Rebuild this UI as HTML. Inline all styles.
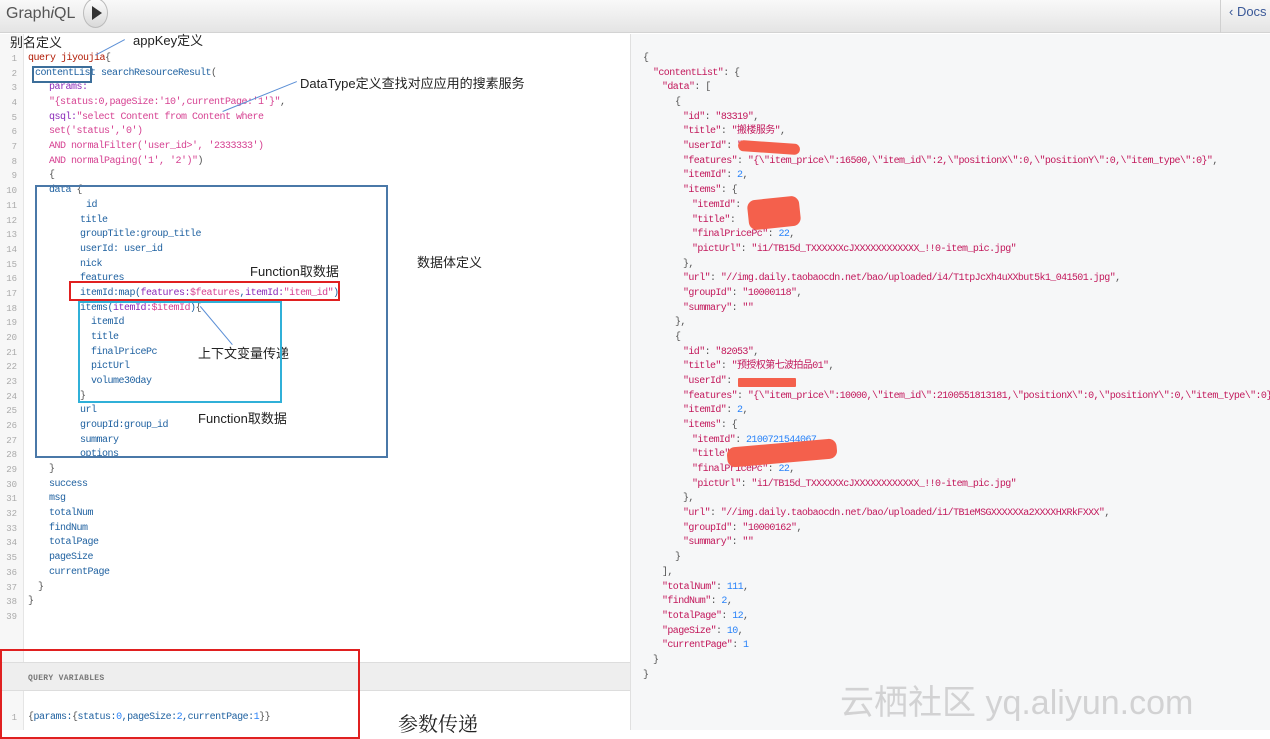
<!DOCTYPE html>
<html><head><meta charset="utf-8"><style>
*{margin:0;padding:0;box-sizing:border-box}
body{width:1270px;height:730px;overflow:hidden;background:#fff;position:relative;font-family:"Liberation Sans","Noto Sans CJK SC",sans-serif}
.top{position:absolute;left:0;top:0;width:1270px;height:33px;background:linear-gradient(#f9f9f9,#e4e4e4);border-bottom:1px solid #d3d3d3}
.logo{position:absolute;left:6px;top:5px;font-size:16px;color:#555}
.run{position:absolute;left:83px;top:-2px;width:25px;height:30px;border-radius:50%;background:linear-gradient(#fdfdfd,#d9d9d9);border:1px solid #bbb}
.run:after{content:"";position:absolute;left:8px;top:7px;border-left:10px solid #333;border-top:7px solid transparent;border-bottom:7px solid transparent}
.docs{position:absolute;left:1220px;top:0;height:33px;border-left:1px solid #d0d0d0;padding:4px 0 0 8px;font-size:13px;color:#3b5998}
.res{position:absolute;left:630px;top:34px;width:640px;height:696px;background:#f6f7f8;border-left:1px solid #e0e0e0}
.gut{position:absolute;left:0;top:34px;width:24px;height:628px;background:#f7f7f7;border-right:1px solid #e5e5e5}
.qv{position:absolute;left:0;top:662px;width:630px;height:29px;background:#eeeeee;border-top:1px solid #ddd;border-bottom:1px solid #ddd;font:bold 8px "Liberation Mono",monospace;color:#777;padding:11px 0 0 28px;letter-spacing:.3px}
.gut2{position:absolute;left:0;top:691px;width:24px;height:39px;background:#f7f7f7;border-right:1px solid #e5e5e5}
.l{position:absolute;font:10px/14.68px "Liberation Mono","Noto Sans CJK SC",monospace;letter-spacing:-0.5px;white-space:pre;color:#1f61a0}
.r{letter-spacing:-0.6px}
.n{position:absolute;left:0;width:17px;text-align:right;font:9px/14.68px "Liberation Mono",monospace;color:#aaa}
.k{color:#b11a04}.s{color:#d64292}.a{color:#8b2bb9}.p{color:#555}.f{color:#1f61a0}.num{color:#2882f9}
.j{color:#c2185b}
.ann{position:absolute;font-size:13px;color:#222;white-space:nowrap}
.box{position:absolute;border:2px solid}
.red{position:absolute;background:#f4604c;border-radius:8px}
.ar{position:absolute;height:1px;background:#5b8fd6;transform-origin:0 0}
</style></head><body>
<div class="top"><div class="logo">Graph<i>i</i>QL</div><div class="run"></div><div class="docs">&#x2039; Docs</div></div>
<div class="gut"></div>
<div class="res"></div>

<div class="n" style="top:52px">1</div><div class="n" style="top:66.7px">2</div><div class="n" style="top:81.4px">3</div><div class="n" style="top:96px">4</div><div class="n" style="top:110.7px">5</div><div class="n" style="top:125.4px">6</div><div class="n" style="top:140.1px">7</div><div class="n" style="top:154.8px">8</div><div class="n" style="top:169.4px">9</div><div class="n" style="top:184.1px">10</div><div class="n" style="top:198.8px">11</div><div class="n" style="top:213.5px">12</div><div class="n" style="top:228.2px">13</div><div class="n" style="top:242.8px">14</div><div class="n" style="top:257.5px">15</div><div class="n" style="top:272.2px">16</div><div class="n" style="top:286.9px">17</div><div class="n" style="top:301.6px">18</div><div class="n" style="top:316.2px">19</div><div class="n" style="top:330.9px">20</div><div class="n" style="top:345.6px">21</div><div class="n" style="top:360.3px">22</div><div class="n" style="top:375px">23</div><div class="n" style="top:389.6px">24</div><div class="n" style="top:404.3px">25</div><div class="n" style="top:419px">26</div><div class="n" style="top:433.7px">27</div><div class="n" style="top:448.4px">28</div><div class="n" style="top:463px">29</div><div class="n" style="top:477.7px">30</div><div class="n" style="top:492.4px">31</div><div class="n" style="top:507.1px">32</div><div class="n" style="top:521.8px">33</div><div class="n" style="top:536.4px">34</div><div class="n" style="top:551.1px">35</div><div class="n" style="top:565.8px">36</div><div class="n" style="top:580.5px">37</div><div class="n" style="top:595.2px">38</div><div class="n" style="top:609.8px">39</div>

<div class="l" style="left:28px;top:52px"><span class="k">query jiyoujia</span><span class="p">{</span></div>
<div class="l" style="left:35px;top:66.7px">contentList searchResourceResult<span class="p">(</span></div>
<div class="l a" style="left:49px;top:81.4px">params:</div>
<div class="l s" style="left:49px;top:96px">"{status:0,pageSize:'10',currentPage:'1'}"<span class="p">,</span></div>
<div class="l" style="left:49px;top:110.7px"><span class="a">qsql:</span><span class="s">"select Content from Content where</span></div>
<div class="l s" style="left:49px;top:125.4px">set('status','0')</div>
<div class="l s" style="left:49px;top:140.1px">AND normalFilter('user_id&gt;', '2333333')</div>
<div class="l s" style="left:49px;top:154.8px">AND normalPaging('1', '2')"<span class="p">)</span></div>
<div class="l p" style="left:49px;top:169.4px">{</div>
<div class="l" style="left:49px;top:184.1px">data <span class="p">{</span></div>
<div class="l" style="left:86px;top:198.8px">id</div>
<div class="l" style="left:80px;top:213.5px">title</div>
<div class="l" style="left:80px;top:228.2px">groupTitle:group_title</div>
<div class="l" style="left:80px;top:242.8px">userId: user_id</div>
<div class="l" style="left:80px;top:257.5px">nick</div>
<div class="l" style="left:80px;top:272.2px">features</div>
<div class="l" style="left:80px;top:286.9px">itemId:map(<span class="a">features:</span><span class="s">$features</span>,<span class="a">itemId:</span><span class="s">"item_id"</span>)</div>
<div class="l" style="left:80px;top:301.6px">items(<span class="a">itemId:</span><span class="s">$itemId</span>)<span class="p">{</span></div>
<div class="l" style="left:91px;top:316.2px">itemId</div>
<div class="l" style="left:91px;top:330.9px">title</div>
<div class="l" style="left:91px;top:345.6px">finalPricePc</div>
<div class="l" style="left:91px;top:360.3px">pictUrl</div>
<div class="l" style="left:91px;top:375px">volume30day</div>
<div class="l p" style="left:80px;top:389.6px">}</div>
<div class="l" style="left:80px;top:404.3px">url</div>
<div class="l" style="left:80px;top:419px">groupId:group_id</div>
<div class="l" style="left:80px;top:433.7px">summary</div>
<div class="l" style="left:80px;top:448.4px">options</div>
<div class="l p" style="left:49px;top:463px">}</div>
<div class="l" style="left:49px;top:477.7px">success</div>
<div class="l" style="left:49px;top:492.4px">msg</div>
<div class="l" style="left:49px;top:507.1px">totalNum</div>
<div class="l" style="left:49px;top:521.8px">findNum</div>
<div class="l" style="left:49px;top:536.4px">totalPage</div>
<div class="l" style="left:49px;top:551.1px">pageSize</div>
<div class="l" style="left:49px;top:565.8px">currentPage</div>
<div class="l p" style="left:38px;top:580.5px">}</div>
<div class="l p" style="left:28px;top:595.2px">}</div>

<div class="qv">QUERY VARIABLES</div>
<div class="gut2"></div>
<div class="n" style="top:711px">1</div>
<div class="l" style="left:28px;top:711px"><span class="p">{</span>params:<span class="p">{</span>status:<span class="num">0</span>,pageSize:<span class="num">2</span>,currentPage:<span class="num">1</span><span class="p">}}</span></div>

<div class="l r p" style="left:643px;top:52px">{</div>
<div class="l r" style="left:653px;top:66.7px"><span class="j">"contentList"</span><span class="p">: {</span></div>
<div class="l r" style="left:662px;top:81.4px"><span class="j">"data"</span><span class="p">: [</span></div>
<div class="l r p" style="left:675px;top:96px">{</div>
<div class="l r j" style="left:683px;top:110.7px">"id"<span class="p">: </span>"83319"<span class="p">,</span></div>
<div class="l r j" style="left:683px;top:125.4px">"title"<span class="p">: </span>"搬楼服务"<span class="p">,</span></div>
<div class="l r j" style="left:683px;top:140.1px">"userId"<span class="p">: </span>"</div>
<div class="l r j" style="left:683px;top:154.8px">"features"<span class="p">: </span>"{\"item_price\":16500,\"item_id\":2,\"positionX\":0,\"positionY\":0,\"item_type\":0}"<span class="p">,</span></div>
<div class="l r j" style="left:683px;top:169.4px">"itemId"<span class="p">: </span><span class="num">2</span><span class="p">,</span></div>
<div class="l r j" style="left:683px;top:184.1px">"items"<span class="p">: {</span></div>
<div class="l r j" style="left:692px;top:198.8px">"itemId"<span class="p">: </span></div>
<div class="l r j" style="left:692px;top:213.5px">"title"<span class="p">: </span></div>
<div class="l r j" style="left:692px;top:228.2px">"finalPricePc"<span class="p">: </span><span class="num">22</span><span class="p">,</span></div>
<div class="l r j" style="left:692px;top:242.8px">"pictUrl"<span class="p">: </span>"i1/TB15d_TXXXXXXcJXXXXXXXXXXXX_!!0-item_pic.jpg"</div>
<div class="l r p" style="left:683px;top:257.5px">},</div>
<div class="l r j" style="left:683px;top:272.2px">"url"<span class="p">: </span>"//img.daily.taobaocdn.net/bao/uploaded/i4/T1tpJcXh4uXXbut5k1_041501.jpg"<span class="p">,</span></div>
<div class="l r j" style="left:683px;top:286.9px">"groupId"<span class="p">: </span>"10000118"<span class="p">,</span></div>
<div class="l r j" style="left:683px;top:301.6px">"summary"<span class="p">: </span>""</div>
<div class="l r p" style="left:675px;top:316.2px">},</div>
<div class="l r p" style="left:675px;top:330.9px">{</div>
<div class="l r j" style="left:683px;top:345.6px">"id"<span class="p">: </span>"82053"<span class="p">,</span></div>
<div class="l r j" style="left:683px;top:360.3px">"title"<span class="p">: </span>"预授权第七波拍品01"<span class="p">,</span></div>
<div class="l r j" style="left:683px;top:375px">"userId"<span class="p">: </span></div>
<div class="l r j" style="left:683px;top:389.6px">"features"<span class="p">: </span>"{\"item_price\":10000,\"item_id\":2100551813181,\"positionX\":0,\"positionY\":0,\"item_type\":0}"<span class="p">,</span></div>
<div class="l r j" style="left:683px;top:404.3px">"itemId"<span class="p">: </span><span class="num">2</span><span class="p">,</span></div>
<div class="l r j" style="left:683px;top:419px">"items"<span class="p">: {</span></div>
<div class="l r j" style="left:692px;top:433.7px">"itemId"<span class="p">: </span><span class="num">2100721544067</span><span class="p">,</span></div>
<div class="l r j" style="left:692px;top:448.4px">"title"<span class="p">: </span>"</div>
<div class="l r j" style="left:692px;top:463px">"finalPricePc"<span class="p">: </span><span class="num">22</span><span class="p">,</span></div>
<div class="l r j" style="left:692px;top:477.7px">"pictUrl"<span class="p">: </span>"i1/TB15d_TXXXXXXcJXXXXXXXXXXXX_!!0-item_pic.jpg"</div>
<div class="l r p" style="left:683px;top:492.4px">},</div>
<div class="l r j" style="left:683px;top:507.1px">"url"<span class="p">: </span>"//img.daily.taobaocdn.net/bao/uploaded/i1/TB1eMSGXXXXXXa2XXXXHXRkFXXX"<span class="p">,</span></div>
<div class="l r j" style="left:683px;top:521.8px">"groupId"<span class="p">: </span>"10000162"<span class="p">,</span></div>
<div class="l r j" style="left:683px;top:536.4px">"summary"<span class="p">: </span>""</div>
<div class="l r p" style="left:675px;top:551.1px">}</div>
<div class="l r p" style="left:662px;top:565.8px">],</div>
<div class="l r j" style="left:662px;top:580.5px">"totalNum"<span class="p">: </span><span class="num">111</span><span class="p">,</span></div>
<div class="l r j" style="left:662px;top:595.2px">"findNum"<span class="p">: </span><span class="num">2</span><span class="p">,</span></div>
<div class="l r j" style="left:662px;top:609.8px">"totalPage"<span class="p">: </span><span class="num">12</span><span class="p">,</span></div>
<div class="l r j" style="left:662px;top:624.5px">"pageSize"<span class="p">: </span><span class="num">10</span><span class="p">,</span></div>
<div class="l r j" style="left:662px;top:639.2px">"currentPage"<span class="p">: </span><span class="num">1</span></div>
<div class="l r p" style="left:653px;top:653.9px">}</div>
<div class="l r p" style="left:643px;top:668.6px">}</div>

<div class="red" style="left:738px;top:142px;width:62px;height:11px;transform:rotate(4deg)"></div>
<div class="red" style="left:748px;top:198px;width:52px;height:30px;transform:rotate(-6deg)"></div>
<div class="red" style="left:738px;top:378px;width:58px;height:9px;border-radius:1px"></div>
<div class="red" style="left:727px;top:443px;width:110px;height:20px;transform:rotate(-5deg)"></div>

<div class="ann" style="left:10px;top:32px">别名定义</div>
<div class="ann" style="left:133px;top:30px">appKey定义</div>
<div class="ann" style="left:300px;top:73px">DataType定义查找对应应用的搜素服务</div>
<div class="ann" style="left:417px;top:252px">数据体定义</div>
<div class="ann" style="left:250px;top:261px">Function取数据</div>
<div class="ann" style="left:198px;top:343px">上下文变量传递</div>
<div class="ann" style="left:198px;top:408px">Function取数据</div>
<div class="ann" style="left:398px;top:708px;font-size:20px;font-family:'Noto Serif CJK SC',serif">参数传递</div>
<div class="ann" style="left:840px;top:675px;font-size:34px;color:rgba(180,180,180,.55)">云栖社区 yq.aliyun.com</div>

<div class="box" style="left:32px;top:66px;width:60px;height:17px;border-color:#3c6e9a"></div>
<div class="box" style="left:35px;top:185px;width:353px;height:273px;border-color:#4a78a8"></div>
<div class="box" style="left:69px;top:281px;width:271px;height:20px;border-color:#e02020"></div>
<div class="box" style="left:78px;top:301px;width:204px;height:102px;border-color:#30b0d8"></div>
<div class="box" style="left:0;top:649px;width:360px;height:90px;border-color:#e02020"></div>

<div class="ar" style="left:125px;top:40px;width:33px;transform:rotate(152deg)"></div>
<div class="ar" style="left:297px;top:82px;width:80px;transform:rotate(158deg)"></div>
<div class="ar" style="left:232px;top:345px;width:50px;transform:rotate(-130deg)"></div>
</body></html>
